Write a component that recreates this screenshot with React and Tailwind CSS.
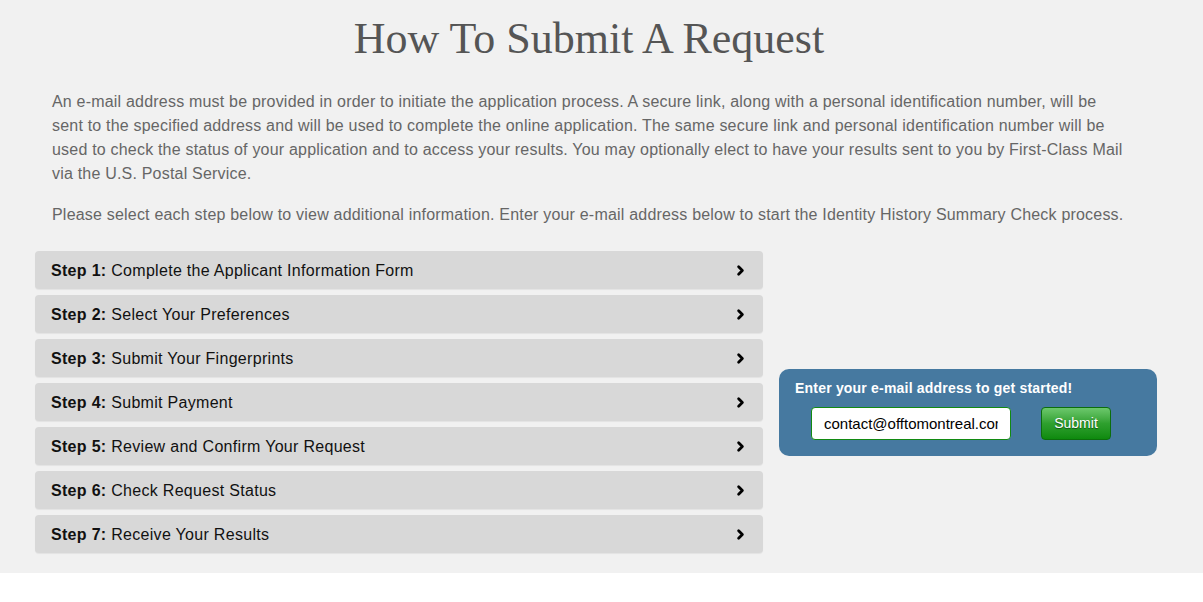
import { ChevronRight } from 'lucide-react';

// How To Submit A Request page
// Intro copy, step accordion rows, e-mail start box

const steps = [
  'Complete the Applicant Information Form',
  'Select Your Preferences',
  'Submit Your Fingerprints',
  'Submit Payment',
  'Review and Confirm Your Request',
  'Check Request Status',
  'Receive Your Results',
];

export default function App() {
  return (
    <div className="min-h-screen bg-white" style={{ fontFamily: '"Liberation Sans", Arial, sans-serif' }}>
      <div className="bg-[#f1f1f1] h-[573px]">
        <div className="w-[1122px] ml-[35px] pt-[14px]">
          {/* Title */}
          <h1 className="text-center text-[44px] leading-[50px] text-[#555555] pr-[14px]" style={{ fontFamily: '"Liberation Serif", Georgia, serif' }}>
            How To Submit A Request
          </h1>

          {/* Intro */}
          <div className="px-[17px] mt-[26px] text-[16px] leading-[24px] text-[#666666] tracking-[0.2px]">
            <p>
              An e-mail address must be provided in order to initiate the application process. A secure link, along with a personal identification number, will be
              <br />
              sent to the specified address and will be used to complete the online application. The same secure link and personal identification number will be
              <br />
              used to check the status of your application and to access your results. You may optionally elect to have your results sent to you by First-Class Mail
              <br />
              via the U.S. Postal Service.
            </p>
            <p className="mt-[17px]">
              Please select each step below to view additional information. Enter your e-mail address below to start the Identity History Summary Check process.
            </p>
          </div>

          <div className="flex items-center gap-[16px] mt-[24px]">
            {/* Steps */}
            <div className="w-[728px] flex flex-col gap-[6px]">
              {steps.map((s, i) => (
                <div key={i} className="h-[38px] bg-[#d8d8d8] rounded-[4px] shadow-[0_1px_1px_rgba(0,0,0,0.06)] flex items-center justify-between pl-[16px] pr-[15px] text-[16px] text-[#111111] tracking-[0.3px]">
                  <span className="pt-[1px]">
                    <span className="font-bold">Step {i + 1}:</span> {s}
                  </span>
                  <ChevronRight className="w-[15px] h-[15px] text-black" strokeWidth={4.5} />
                </div>
              ))}
            </div>

            {/* Email start box */}
            <div className="w-[378px] h-[87px] mt-[20px] bg-[#4679a0] rounded-[10px] pt-[11px] pl-[16px]">
              <div className="text-white font-bold text-[14px] leading-[16px] tracking-[0.2px]">
                Enter your e-mail address to get started!
              </div>
              <div className="flex items-center mt-[11px] pl-[16px] gap-[30px]">
                <input
                  type="text"
                  defaultValue="contact@offtomontreal.com"
                  className="w-[200px] h-[33px] bg-white border border-[#128a12] rounded-[4px] px-[12px] text-[15px] text-black outline-none"
                />
                <button className="w-[70px] h-[33px] rounded-[4px] border border-[#0c6e0c] text-white text-[14px] bg-gradient-to-b from-[#6cc86c] via-[#2ea02e] to-[#0d8a0d] [text-shadow:0_1px_1px_rgba(0,0,0,0.5)]">
                  Submit
                </button>
              </div>
            </div>
          </div>
        </div>
      </div>
    </div>
  );
}
